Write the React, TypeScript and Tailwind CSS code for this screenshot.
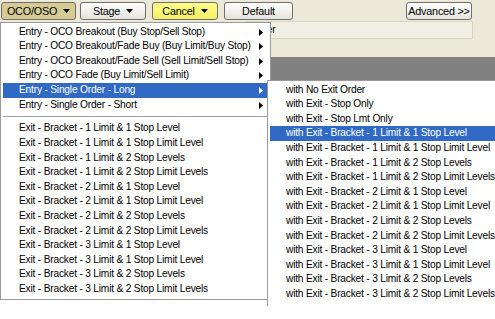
import React from "react";

const entryItems = [
  "Entry - OCO Breakout (Buy Stop/Sell Stop)",
  "Entry - OCO Breakout/Fade Buy (Buy Limit/Buy Stop)",
  "Entry - OCO Breakout/Fade Sell (Sell Limit/Sell Stop)",
  "Entry - OCO Fade (Buy Limit/Sell Limit)",
  "Entry - Single Order - Long",
  "Entry - Single Order - Short",
];

const brackets = [
  "1 Limit & 1 Stop Level",
  "1 Limit & 1 Stop Limit Level",
  "1 Limit & 2 Stop Levels",
  "1 Limit & 2 Stop Limit Levels",
  "2 Limit & 1 Stop Level",
  "2 Limit & 1 Stop Limit Level",
  "2 Limit & 2 Stop Levels",
  "2 Limit & 2 Stop Limit Levels",
  "3 Limit & 1 Stop Level",
  "3 Limit & 1 Stop Limit Level",
  "3 Limit & 2 Stop Levels",
  "3 Limit & 2 Stop Limit Levels",
];

const subItems = [
  "with No Exit Order",
  "with Exit - Stop Only",
  "with Exit - Stop Lmt Only",
  ...brackets.map((b) => `with Exit - Bracket - ${b}`),
];

const Arrow = ({ white }: { white?: boolean }) => (
  <svg width="4" height="7" viewBox="0 0 4 7" className="absolute right-[5px] top-[4px]">
    <path d="M0 0 L4 3.5 L0 7z" fill={white ? "#fff" : "#000"} />
  </svg>
);

const Caret = () => (
  <svg width="7" height="4" viewBox="0 0 7 4" className="ml-[6px]">
    <path d="M0 0 H7 L3.5 4z" fill="#000" />
  </svg>
);

const Btn = ({
  label,
  caret,
  bg,
  w,
}: {
  label: string;
  caret?: boolean;
  bg: string;
  w: string;
}) => (
  <div
    className={`${w} ${bg} h-[18px] flex items-center justify-center rounded-[3px] border border-[#6f6f6f] text-[10.8px] tracking-[-0.2px] text-black`}
  >
    {label}
    {caret && <Caret />}
  </div>
);

export default function App() {
  return (
    <div
      className="relative w-[495px] h-[319px] overflow-hidden bg-white"
      style={{ fontFamily: '"Liberation Sans", Arial, sans-serif' }}
    >
      {/* toolbar */}
      <div className="h-[21px] bg-[#ECE9D8] flex items-start pt-[2px] pl-[1px]">
        <Btn label="OCO/OSO" caret w="w-[75px]" bg="bg-[#D6CB95]" />
        <div className="w-[4px]" />
        <Btn label="Stage" caret w="w-[66px]" bg="bg-gradient-to-b from-white to-[#e4e3dc]" />
        <div className="w-[6px]" />
        <Btn label="Cancel" caret w="w-[66px]" bg="bg-gradient-to-b from-[#ffff88] to-[#f6f066]" />
        <div className="w-[6px]" />
        <Btn label="Default" w="w-[69px]" bg="bg-gradient-to-b from-white to-[#e4e3dc]" />
        <div className="w-[113px]" />
        <Btn label="Advanced >>" w="w-[66px]" bg="bg-gradient-to-b from-white to-[#e4e3dc]" />
      </div>

      {/* panel area */}
      <div className="h-[36px] bg-[#ECE9D8] pl-[245px] pr-[22px]">
        <div className="h-[18px] border border-[#d8d5c0] bg-[#F1EFE4] pl-[4px] text-[10px] leading-[16px] text-black">
          Order
        </div>
      </div>

      {/* gray band */}
      <div className="h-[23px] bg-[#808080]" />

      {/* main menu */}
      <div className="absolute left-0 top-[22px] w-[271px] h-[278px] border border-[#9a9a9a] bg-white pt-[1.7px] px-[2px] text-[10.2px] tracking-[-0.2px] text-black">
        {entryItems.map((t, i) => {
          const hi = i === 4;
          return (
            <div
              key={t}
              className={`relative h-[14.6px] leading-[14.6px] pl-[16px] whitespace-nowrap ${
                hi ? "bg-[#316AC5] text-white" : ""
              }`}
            >
              {t}
              <Arrow white={hi} />
            </div>
          );
        })}
        <div className="h-[9.1px] flex items-center">
          <div className="w-full h-px bg-[#a0a0a0]" />
        </div>
        {brackets.map((b) => (
          <div key={b} className="h-[14.6px] leading-[14.6px] pl-[16px] whitespace-nowrap">
            Exit - Bracket - {b}
          </div>
        ))}
      </div>

      {/* submenu */}
      <div className="absolute left-[267px] top-[80px] w-[228px] h-[226px] border-l border-t border-[#9a9a9a] bg-white pt-[1.7px] pl-[2px] text-[10.2px] tracking-[-0.2px] text-black">
        {subItems.map((t, i) => (
          <div
            key={t}
            className={`h-[14.6px] leading-[14.6px] pl-[16px] whitespace-nowrap ${
              i === 3 ? "bg-[#316AC5] text-white" : ""
            }`}
          >
            {t}
          </div>
        ))}
      </div>
    </div>
  );
}
